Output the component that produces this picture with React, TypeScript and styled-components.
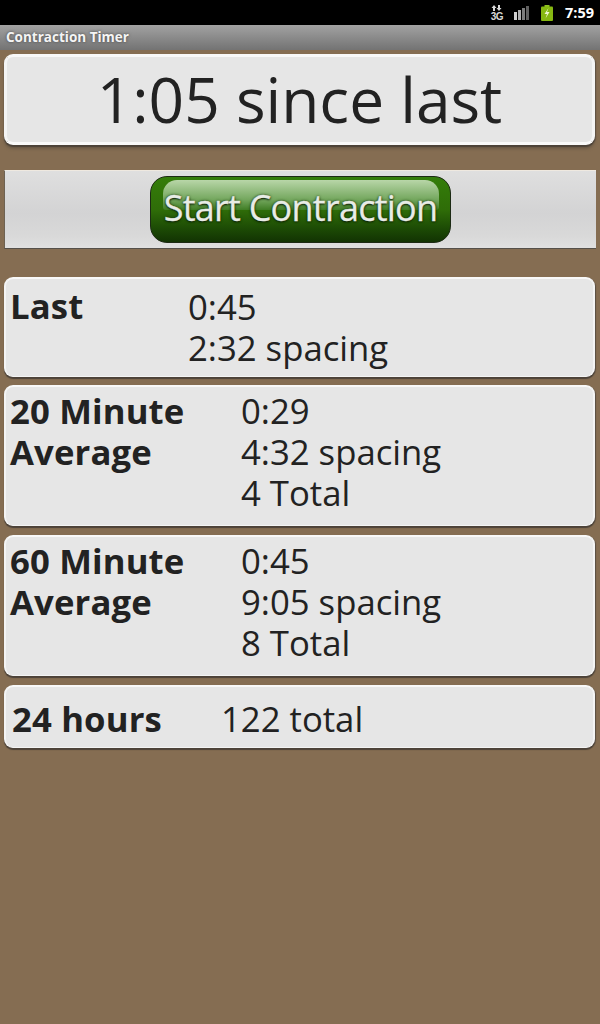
import React from "react";
import styled, { createGlobalStyle } from "styled-components";

const GlobalStyle = createGlobalStyle`
  html, body {
    margin: 0;
    padding: 0;
    background: #856d52;
  }
  body {
    font-family: "Open Sans", "Noto Sans", sans-serif;
  }
`;

const Screen = styled.div`
  width: 600px;
  height: 1024px;
  overflow: hidden;
  display: flex;
  flex-direction: column;
  background: #856d52;
`;

const StatusBar = styled.div`
  height: 25px;
  background: #000;
  display: flex;
  align-items: center;
  justify-content: flex-end;
`;

const NetworkLabel = styled.div`
  width: 12px;
  margin-right: 11px;
  color: #d8d8d8;
  font: 700 10px/9px "Liberation Sans", sans-serif;
  letter-spacing: -0.5px;
  display: flex;
  flex-direction: column;
  align-items: center;
  gap: 1px;
`;

const SignalIcon = styled.svg`
  margin-right: 11px;
`;

const BatteryIcon = styled.svg`
  margin-right: 12px;
`;

const Clock = styled.div`
  color: #fff;
  font: 700 14.5px/25px "Open Sans", sans-serif;
  margin-right: 6px;
`;

const TitleBar = styled.div`
  height: 25px;
  padding-left: 6px;
  background: linear-gradient(#a2a2a2, #737373);
  color: #f4f4f4;
  font: 700 13.5px/24px "Open Sans", sans-serif;
  text-shadow: 0 0 3px #444;
`;

const Content = styled.div`
  padding: 4px 0 0 4px;
  display: flex;
  flex-direction: column;
`;

const Card = styled.div<{ $height: number; $gap?: number }>`
  box-sizing: border-box;
  width: 591px;
  height: ${(p) => p.$height}px;
  margin-bottom: ${(p) => p.$gap ?? 9}px;
  border-radius: 9px;
  background: #e6e6e6;
  border-top: 2px solid #f8f8f8;
  border-left: 2px solid #f4f4f4;
  border-right: 2px solid #f4f4f4;
  box-shadow: 0 2px 1px #4c4238, 1px 1px 1px #5d5145;
  color: #222;
`;

const SinceLast = styled(Card)`
  font-size: 62.2px;
  line-height: 84px;
  text-align: center;
  border-top-width: 3px;
  border-left-width: 3px;
  border-right-width: 3px;
  border-bottom: 3px solid #fafafa;
  box-shadow: 0 2px 1px #4c4238, 0 4px 3px #6d5c48, 1px 1px 1px #5d5145;
`;

const ButtonBand = styled.div`
  box-sizing: border-box;
  width: 592px;
  height: 79px;
  margin: 0 0 28px 0;
  padding-left: 145px;
  padding-top: 5px;
  border-top: 1px solid #efe9e0;
  border-left: 1px solid #6e6252;
  border-bottom: 1px solid #55504a;
  background: linear-gradient(#dfdfdf, #d3d3d4 55%, #d9d9d9 85%, #e0e0e0);
`;

const StartButton = styled.button`
  position: relative;
  box-sizing: border-box;
  display: block;
  width: 301px;
  height: 67px;
  padding: 0 0 3px 0;
  border: 1px solid #1c2a14;
  border-radius: 17px;
  background: linear-gradient(#347d0a, #2f6d08 50%, #1c4a05 80%, #123303);
  color: #e8ece6;
  font: 400 36px/60px "Open Sans", sans-serif;
  letter-spacing: -0.75px;
  -webkit-text-stroke: 0.3px #e8ece6;
  text-shadow: 0 1px 2px #0a1d00, 0 0 3px #16340a;
  overflow: hidden;
`;

const Gloss = styled.span`
  position: absolute;
  left: 12px;
  right: 11px;
  top: 3px;
  height: 30px;
  border-radius: 14px 14px 3px 3px;
  background: linear-gradient(#b8d6a8, #74a75e 65%, #3f7d24);
`;

const ButtonLabel = styled.span`
  position: relative;
`;

const StatCard = styled(Card)<{ $left: number; $column: number; $top: number }>`
  display: grid;
  grid-template-columns: ${(p) => p.$column}px 1fr;
  padding-left: ${(p) => p.$left}px;
  padding-top: ${(p) => p.$top}px;
  font-size: 34.7px;
  line-height: 41px;
  border-bottom: 1px solid #f4f4f4;
`;

const StatLabel = styled.div`
  font-weight: 700;
  letter-spacing: 0.15px;
`;

const StatValues = styled.div<{ $drop?: number }>`
  display: flex;
  flex-direction: column;
  margin-top: ${(p) => p.$drop ?? 0}px;
`;

const stats = [
  { label: ["Last"], values: ["0:45", "2:32 spacing"], height: 100, left: 4, column: 178, top: 6, gap: 8, drop: 1 },
  { label: ["20 Minute", "Average"], values: ["0:29", "4:32 spacing", "4 Total"], height: 141, left: 4, column: 231, top: 3, gap: 9, drop: 0 },
  { label: ["60 Minute", "Average"], values: ["0:45", "9:05 spacing", "8 Total"], height: 141, left: 4, column: 231, top: 3, gap: 9, drop: 0 },
];

export default function App() {
  return (
    <Screen>
      <GlobalStyle />
      <StatusBar>
        <NetworkLabel>
          <svg width="11" height="6" viewBox="0 0 11 6">
            <path d="M3 0 0.5 3H2v3h2V3h1.500zM8 6l2.500-3H9V0H7v3H5.500z" fill="#d8d8d8" />
          </svg>
          3G
        </NetworkLabel>
        <SignalIcon width="16" height="14" viewBox="0 0 16 14">
          <rect x="0" y="6" width="3" height="8" fill="#d0d0d0" />
          <rect x="4" y="4" width="3" height="10" fill="#b0b0b0" />
          <rect x="8" y="2" width="3" height="12" fill="#7c7c7c" />
          <rect x="12" y="0" width="3" height="14" fill="#606060" />
        </SignalIcon>
        <BatteryIcon width="12" height="16" viewBox="0 0 12 16">
          <rect x="3.500" y="0" width="5" height="2" fill="#8fc31f" />
          <rect x="0" y="1.500" width="12" height="14.500" rx="1" fill="#86b812" />
          <path d="M7.500 3 3.500 9h2.500l-1.500 4.500 4-6.500H6z" fill="#eef7d0" />
        </BatteryIcon>
        <Clock>7:59</Clock>
      </StatusBar>
      <TitleBar>Contraction Timer</TitleBar>
      <Content>
        <SinceLast $height={91} $gap={25}>1:05 since last</SinceLast>
        <ButtonBand>
          <StartButton>
            <Gloss />
            <ButtonLabel>Start Contraction</ButtonLabel>
          </StartButton>
        </ButtonBand>
        {stats.map((s) => (
          <StatCard key={s.label[0]} $height={s.height} $left={s.left} $column={s.column} $top={s.top} $gap={s.gap}>
            <StatLabel>
              {s.label.map((l) => (
                <div key={l}>{l}</div>
              ))}
            </StatLabel>
            <StatValues $drop={s.drop}>
              {s.values.map((v) => (
                <div key={v}>{v}</div>
              ))}
            </StatValues>
          </StatCard>
        ))}
        <StatCard $height={63} $left={6} $column={209} $top={11}>
          <StatLabel>24 hours</StatLabel>
          <StatValues>122 total</StatValues>
        </StatCard>
      </Content>
    </Screen>
  );
}
